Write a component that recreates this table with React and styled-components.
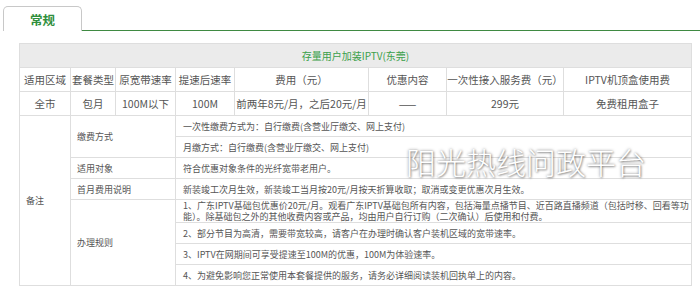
import styled, {createGlobalStyle} from "styled-components";

const GlobalStyle = createGlobalStyle`
  body {
    margin: 0;
    background: #fff;
    font-family: "Noto Sans CJK SC", "Noto Sans", sans-serif;
  }
`;

const columns = [51, 45, 60, 59, 134, 78, 117, 128];

const headers = ['适用区域', '套餐类型', '原宽带速率', '提速后速率', '费用（元）', '优惠内容', '一次性接入服务费（元）', 'IPTV机顶盒使用费'];
const values = ['全市', '包月', '100M以下', '100M', '前两年8元/月，之后20元/月', '——', '299元', '免费租用盒子'];

const notes = [
    {label: '缴费方式', items: ['一次性缴费方式为：自行缴费(含营业厅缴交、网上支付)', '月缴方式：自行缴费(含营业厅缴交、网上支付)']},
    {label: '适用对象', items: ['符合优惠对象条件的光纤宽带老用户。']},
    {label: '首月费用说明', items: ['新装竣工次月生效，新装竣工当月按20元/月按天折算收取；取消或变更优惠次月生效。']},
    {
        label: '办理规则', items: [
            '1、广东IPTV基础包优惠价20元/月。观看广东IPTV基础包所有内容，包括海量点播节目、近百路直播频道（包括时移、回看等功能）。除基础包之外的其他收费内容或产品，均由用户自行订购（二次确认）后使用和付费。',
            '2、部分节目为高清，需要带宽较高，请客户在办理时确认客户装机区域的宽带速率。',
            '3、IPTV在网期间可享受提速至100M的优惠，100M为体验速率。',
            '4、为避免影响您正常使用本套餐提供的服务，请务必详细阅读装机回执单上的内容。'
        ]
    }
];

const App = () => {
    const noteRows = notes.reduce((sum, item) => sum + item.items.length, 0);

    return (
        <Page>
            <GlobalStyle/>
            <TabBar>
                <Tab>常规</Tab>
                <TabLine/>
            </TabBar>

            <Content>
                <Table>
                    <colgroup>
                        {columns.map((w, i) => <col key={i} style={{width: w}}/>)}
                    </colgroup>
                    <tbody>
                    <tr>
                        <TitleCell colSpan={8}>存量用户加装IPTV(东莞)</TitleCell>
                    </tr>
                    <tr>
                        {headers.map((h) => <Cell key={h}>{h}</Cell>)}
                    </tr>
                    <tr>
                        {values.map((v) => <Cell key={v}>{v}</Cell>)}
                    </tr>
                    {notes.map((note, n) => note.items.map((text, i) => (
                        <tr key={n + '-' + i}>
                            {n === 0 && i === 0 && <NoteCell rowSpan={noteRows}>备注</NoteCell>}
                            {i === 0 && <NoteCell colSpan={2} rowSpan={note.items.length}>{note.label}</NoteCell>}
                            <NoteCell colSpan={5} $text>{text}</NoteCell>
                        </tr>
                    )))}
                    </tbody>
                </Table>
                <Watermark>阳光热线问政平台</Watermark>
            </Content>
        </Page>
    );
};

export default App;

const Page = styled.div`
  width: 700px;
  height: 294px;
  overflow: hidden;
`;

const TabBar = styled.div`
  display: flex;
  align-items: flex-end;
  padding: 6px 0 0 3px;
`;

const Tab = styled.div`
  width: 77px;
  height: 24px;
  border: 1px solid #c8c8c8;
  border-bottom: none;
  border-radius: 5px 5px 0 0;
  display: flex;
  align-items: center;
  justify-content: center;
  color: #2f8f3c;
  font-size: 12.5px;
  font-weight: 700;
`;

const TabLine = styled.div`
  flex: 1;
  border-bottom: 1px solid #3f8a42;
`;

const Content = styled.div`
  position: relative;
  padding: 12px 0 0 19px;
`;

const Table = styled.table`
  width: 673px;
  table-layout: fixed;
  border-collapse: collapse;
  color: #555;
`;

const Cell = styled.td`
  border: 1px solid #dedede;
  text-align: center;
  font-size: 10.5px;
  line-height: 13px;
  padding: 5px 0;
  white-space: nowrap;
`;

const TitleCell = styled(Cell)`
  background: #ebebeb;
  color: #3aa04a;
  font-size: 10px;
  padding: 5px 0;
`;

const NoteCell = styled.td`
  border: 1px solid #dedede;
  height: 20px;
  font-size: 9px;
  line-height: 11px;
  padding: ${(p) => (p.$text ? '0 1px 0 7px' : '0 6px')};
  text-align: left;
  vertical-align: middle;
`;

const Watermark = styled.div`
  position: absolute;
  left: 406px;
  top: 115px;
  font-size: 30px;
  line-height: 30px;
  font-weight: 300;
  color: #fff;
  text-shadow: 0 0 3px rgba(0, 0, 0, 0.5), 1px 1px 2px rgba(0, 0, 0, 0.3);
  white-space: nowrap;
  pointer-events: none;
`;
